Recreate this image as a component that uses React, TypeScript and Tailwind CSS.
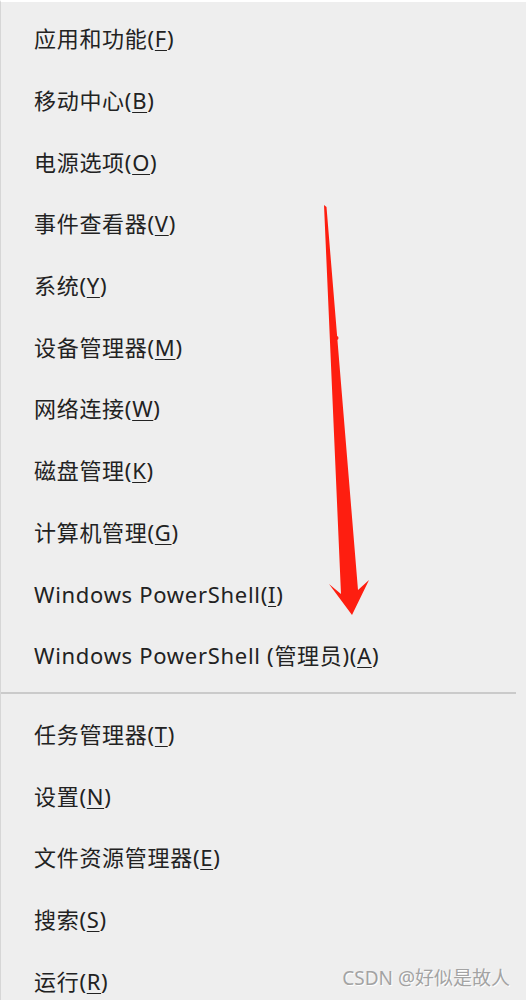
import React from "react";

const topItems = [
  { label: "应用和功能", key: "F" },
  { label: "移动中心", key: "B" },
  { label: "电源选项", key: "O" },
  { label: "事件查看器", key: "V" },
  { label: "系统", key: "Y" },
  { label: "设备管理器", key: "M" },
  { label: "网络连接", key: "W" },
  { label: "磁盘管理", key: "K" },
  { label: "计算机管理", key: "G" },
  { label: "Windows PowerShell", key: "I" },
  { label: "Windows PowerShell (管理员)", key: "A" },
];

const bottomItems = [
  { label: "任务管理器", key: "T" },
  { label: "设置", key: "N" },
  { label: "文件资源管理器", key: "E" },
  { label: "搜索", key: "S" },
  { label: "运行", key: "R" },
];

function MenuRow({ label, hotkey }: { label: string; hotkey: string }) {
  return (
    <div className="flex h-[61.7px] items-center pl-[33px] text-[22px] tracking-[0.7px] text-[#222222] whitespace-nowrap">
      <span>
        {label}(<span className="underline decoration-1 underline-offset-[3px]">{hotkey}</span>)
      </span>
    </div>
  );
}

function RedArrow() {
  return (
    <svg
      className="pointer-events-none absolute left-0 top-0"
      width="526"
      height="1000"
      viewBox="0 0 526 1000"
    >
      <polygon
        points="323,203 325.5,205 357,588 368,578 351,613 328,582 340,592"
        fill="#fe1e10"
      />
      <circle cx="335.5" cy="336" r="2" fill="#fe1e10" />
    </svg>
  );
}

export default function App() {
  return (
    <div
      className="relative h-[1000px] w-[526px] overflow-hidden border-l border-t-2 border-l-[#d6d6d6] border-t-white bg-[#eeeeee]"
      style={{ fontFamily: "'Noto Sans', 'Noto Sans CJK SC', sans-serif" }}
    >
      <div className="flex flex-col pt-[6px]">
        {topItems.map((it) => (
          <MenuRow key={it.key} label={it.label} hotkey={it.key} />
        ))}
        <div className="mt-[5px] mb-[10px] h-[2px] w-[515px] bg-[#cacaca]" />
        {bottomItems.map((it) => (
          <MenuRow key={it.key} label={it.label} hotkey={it.key} />
        ))}
      </div>

      <RedArrow />

      {/* watermark */}
      <div className="absolute bottom-[8px] right-[16px] text-[19px] text-[#a3a3a3] [text-shadow:1px_1px_0_#ffffff]">
        CSDN @好似是故人
      </div>
    </div>
  );
}
